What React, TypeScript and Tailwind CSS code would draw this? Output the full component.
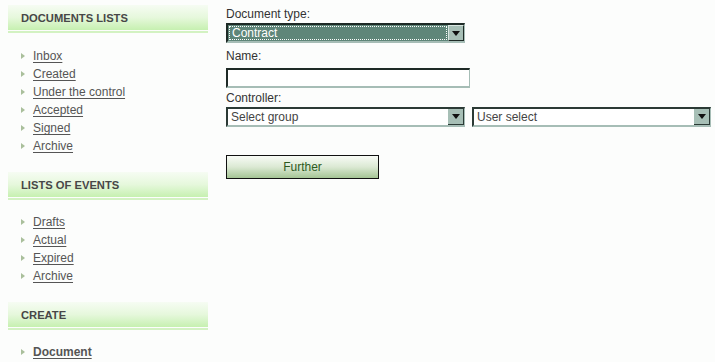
import React from "react";

const font = { fontFamily: '"Liberation Sans", Arial, sans-serif' };

function Bullet() {
  return (
    <svg width="4" height="6" viewBox="0 0 4 6" className="mr-[8px] shrink-0">
      <path d="M0 0 L4 3 L0 6 Z" fill="#a9bf9b" />
    </svg>
  );
}

function Header({ title }: { title: string }) {
  return (
    <div>
      <div className="h-[25px] bg-gradient-to-b from-[#f6fcf3] via-[#e6f8dc] to-[#c6f0b0] flex items-center pt-[1px] pl-[13px] text-[11.2px] font-bold text-[#474747]">
        {title}
      </div>
      <div className="mt-[1px] h-[2px] bg-[#d3f2c2]" />
    </div>
  );
}

function Item({ label, bold }: { label: string; bold?: boolean }) {
  return (
    <div className="h-[18px] flex items-center pl-[13px]">
      <Bullet />
      <span className={"text-[12px] text-[#555] underline underline-offset-[2px] " + (bold ? "font-bold" : "")}>{label}</span>
    </div>
  );
}

function Arrow() {
  return (
    <svg width="8" height="5" viewBox="0 0 8 5">
      <path d="M0 0 H8 L4 5 Z" fill="#111" />
    </svg>
  );
}

function FakeSelect({ text, width }: { text: string; width: string }) {
  return (
    <div className={"h-[20px] border-t-2 border-l-2 border-t-[#2b3a35] border-l-[#2b3a35] border-r border-b-2 border-r-[#a6bdb6] border-b-[#a6bdb6] bg-white flex " + width}>
      <div className="flex-1 flex items-center pl-[3px] text-[12px] text-[#444]">{text}</div>
      <div className="w-[16px] h-full bg-[#a7bfb6] border-r border-b border-[#2b3a35] flex items-center justify-center">
        <Arrow />
      </div>
    </div>
  );
}

export default function App() {
  return (
    <div className="w-[715px] h-[362px] bg-[#fcfdfc] flex overflow-hidden" style={font}>
      <div className="w-[200px] ml-[8px] pt-[5px]">
        <Header title="DOCUMENTS LISTS" />
        <div className="pt-[14px] pb-[17px]">
          <Item label="Inbox" />
          <Item label="Created" />
          <Item label="Under the control" />
          <Item label="Accepted" />
          <Item label="Signed" />
          <Item label="Archive" />
        </div>
        <Header title="LISTS OF EVENTS" />
        <div className="pt-[13px] pb-[17px]">
          <Item label="Drafts" />
          <Item label="Actual" />
          <Item label="Expired" />
          <Item label="Archive" />
        </div>
        <Header title="CREATE" />
        <div className="pt-[13px]">
          <Item label="Document" bold />
        </div>
      </div>
      <div className="ml-[18px] pt-[6px] flex flex-col text-[12px] text-[#333]">
        <div className="h-[16px] leading-[16px]">Document type:</div>
        <div className="mt-[1px] w-[239px] h-[20px] border-t-2 border-l-2 border-t-[#1e2a26] border-l-[#1e2a26] border-r border-b-2 border-r-[#a6bdb6] border-b-[#a6bdb6] bg-[#5f8679] flex">
          <div className="flex-1 m-[1px] border border-dotted border-white flex items-center pl-[2px] text-[12px] text-white">Contract</div>
          <div className="w-[16px] h-full bg-[#a7bfb6] border-l border-t border-l-[#d9e6e1] border-t-[#d9e6e1] border-r border-b border-r-[#1e2a26] border-b-[#1e2a26] flex items-center justify-center">
            <Arrow />
          </div>
        </div>
        <div className="mt-[5px] h-[16px] leading-[16px]">Name:</div>
        <div className="mt-[4px] w-[244px] h-[20px] border-t-2 border-l-2 border-t-[#1e2a26] border-l-[#1e2a26] border-r border-b-2 border-r-[#a6bdb6] border-b-[#a6bdb6] bg-white" />
        <div className="mt-[2px] h-[16px] leading-[16px]">Controller:</div>
        <div className="mt-[1px] flex gap-[7px]">
          <FakeSelect text="Select group" width="w-[239px]" />
          <FakeSelect text="User select" width="w-[239px]" />
        </div>
        <div className="mt-[28px] w-[153px] h-[24px] border border-[#111] bg-gradient-to-b from-[#f8fbf6] via-[#dbe9d3] to-[#a5c595] flex items-center justify-center text-[12px] text-[#2e5b1f]">
          Further
        </div>
      </div>
    </div>
  );
}
